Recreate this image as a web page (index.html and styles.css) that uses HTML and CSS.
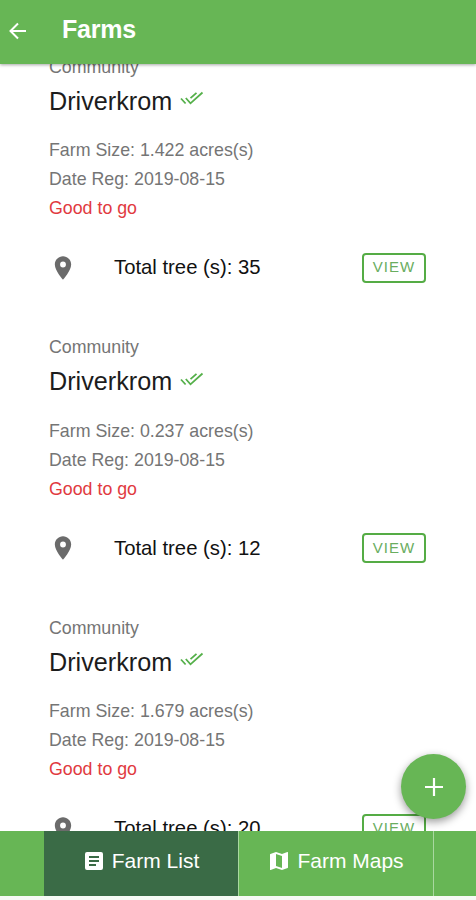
FILE: index.html
```html
<!DOCTYPE html>
<html lang="en">
<head>
    <meta charset="UTF-8">
    <meta name="viewport" content="width=device-width, initial-scale=1.0">
    <title>Farms</title>
    <link rel="stylesheet" href="styles.css">
</head>
<body>
    <!-- shared icons -->
    <svg class="sprite">
        <symbol id="done-all" viewBox="0 0 24 16">
            <path d="M1 7.5l4.6 5M5.8 7l4.700 5.300L22.500 1.500M10.500 7.200l6-5.400"/>
        </symbol>
        <symbol id="pin" viewBox="0 0 24 24">
            <path d="M12 2C8.13 2 5 5.13 5 9c0 5.25 7 13 7 13s7-7.75 7-13c0-3.87-3.13-7-7-7zm0 9.5a2.5 2.5 0 0 1 0-5 2.5 2.5 0 0 1 0 5z"/>
        </symbol>
    </svg>

    <header class="toolbar">
        <svg class="back" viewBox="0 0 24 24"><path d="M20 12H5M12 4.500L4.500 12l7.500 7.500"/></svg>
        <h1>Farms</h1>
    </header>

    <main class="farm-list">
        <div class="farm">
            <p class="label">Community</p>
            <h2>Driverkrom <svg class="check"><use href="#done-all"/></svg></h2>
            <p class="info">Farm Size: 1.422 acres(s)</p>
            <p class="info">Date Reg: 2019-08-15</p>
            <p class="info status">Good to go</p>
            <div class="trees">
                <svg class="pin"><use href="#pin"/></svg>
                <span class="total">Total tree (s): 35</span>
                <button class="view">VIEW</button>
            </div>
        </div>

        <div class="farm">
            <p class="label">Community</p>
            <h2>Driverkrom <svg class="check"><use href="#done-all"/></svg></h2>
            <p class="info">Farm Size: 0.237 acres(s)</p>
            <p class="info">Date Reg: 2019-08-15</p>
            <p class="info status">Good to go</p>
            <div class="trees">
                <svg class="pin"><use href="#pin"/></svg>
                <span class="total">Total tree (s): 12</span>
                <button class="view">VIEW</button>
            </div>
        </div>

        <div class="farm">
            <p class="label">Community</p>
            <h2>Driverkrom <svg class="check"><use href="#done-all"/></svg></h2>
            <p class="info">Farm Size: 1.679 acres(s)</p>
            <p class="info">Date Reg: 2019-08-15</p>
            <p class="info status">Good to go</p>
            <div class="trees">
                <svg class="pin"><use href="#pin"/></svg>
                <span class="total">Total tree (s): 20</span>
                <button class="view">VIEW</button>
            </div>
        </div>
    </main>

    <button class="fab">
        <svg viewBox="0 0 24 24"><path d="M12 3v18M3 12h18"/></svg>
    </button>

    <nav class="tabs">
        <a class="tab active">
            <svg viewBox="0 0 24 24"><path d="M19 3H5a2 2 0 0 0-2 2v14a2 2 0 0 0 2 2h14a2 2 0 0 0 2-2V5a2 2 0 0 0-2-2zm-5 14H7v-2h7v2zm3-4H7v-2h10v2zm0-4H7V7h10v2z"/></svg>
            Farm List
        </a>
        <a class="tab">
            <svg viewBox="0 0 24 24"><path d="M20.500 3l-.16.03L15 5.100 9 3 3.360 4.900c-.21.07-.36.25-.36.48V20.500a.5.5 0 0 0 .66.47L9 18.900l6 2.100 5.640-1.900c.21-.07.36-.25.36-.48V3.500a.5.5 0 0 0-.5-.5zM15 19l-6-2.110V5l6 2.110V19z"/></svg>
            Farm Maps
        </a>
    </nav>
</body>
</html>
```

FILE: styles.css
```css
* {
    box-sizing: border-box;
}

body {
    margin: 0;
    height: 900px;
    display: flex;
    flex-direction: column;
    overflow: hidden;
    background-color: #f6faf5;
    font-family: "Liberation Sans", Arial, sans-serif;
}

h1, h2, p {
    margin: 0;
    font-weight: normal;
}

button {
    font-family: inherit;
    cursor: pointer;
}

.sprite {
    display: none;
}

/* top bar */
.toolbar {
    position: relative;
    z-index: 1;
    flex: none;
    height: 64px;
    padding: 0 6px 3px;
    display: flex;
    align-items: center;
    background-color: #67b655;
    color: white;
    box-shadow: 0 1px 3px rgba(0, 0, 0, 0.35);
}

.back {
    width: 24px;
    height: 24px;
    fill: none;
    stroke: white;
    stroke-width: 2;
}

.toolbar h1 {
    margin-left: 32px;
    padding-bottom: 3px;
    font-size: 25px;
    font-weight: bold;
    line-height: 30px;
    letter-spacing: -0.2px;
}

/* list */
.farm-list {
    flex: 1;
    min-height: 0;
    overflow: hidden;
    background-color: white;
}

.farm {
    padding: 0 50px 22.3px 49px;
}

.farm:first-child {
    margin-top: -10.4px;
}

.label {
    font-size: 17.8px;
    line-height: 26px;
    color: #757575;
}

.farm h2 {
    display: flex;
    align-items: center;
    gap: 8px;
    margin: 3px 0 17.400px;
    font-size: 25.2px;
    line-height: 36px;
    color: #1c1c1c;
}

.check {
    width: 24px;
    height: 16px;
    margin-top: -3px;
    fill: none;
    stroke: #55b04a;
    stroke-width: 1.8;
}

.info {
    font-size: 17.8px;
    line-height: 29px;
    color: #757575;
}

.status {
    color: #e13a3f;
}

.trees {
    display: flex;
    align-items: center;
    height: 89px;
}

.pin {
    width: 28px;
    height: 28px;
    fill: #6b6b6b;
}

.total {
    flex: 1;
    margin-left: 37px;
    font-size: 20.3px;
    color: #111;
}

.view {
    width: 64px;
    height: 30px;
    padding: 0 0 2px;
    border: 2px solid #55ac45;
    border-radius: 4px;
    background-color: white;
    color: #69ad60;
    font-size: 15px;
    letter-spacing: 1px;
}

/* add button */
.fab {
    position: absolute;
    left: 401px;
    top: 754px;
    z-index: 2;
    width: 65px;
    height: 65px;
    padding: 0;
    display: flex;
    align-items: center;
    justify-content: center;
    border: none;
    border-radius: 50%;
    background-color: #67b655;
    box-shadow: 0 3px 8px rgba(0, 0, 0, 0.4);
}

.fab svg {
    width: 24px;
    height: 24px;
    fill: none;
    stroke: white;
    stroke-width: 2.2;
}

/* bottom tabs */
.tabs {
    flex: none;
    height: 65px;
    margin-bottom: 4px;
    padding-left: 44px;
    display: flex;
    background-color: #67b655;
}

.tab {
    width: 195px;
    padding: 0 1px 5px 0;
    display: flex;
    align-items: center;
    justify-content: center;
    gap: 6px;
    border-right: 1px solid #a9d8a0;
    color: white;
    font-size: 21px;
}

.tab svg {
    width: 24px;
    height: 24px;
    fill: white;
}

.active {
    background-color: #3a6b46;
}
```
